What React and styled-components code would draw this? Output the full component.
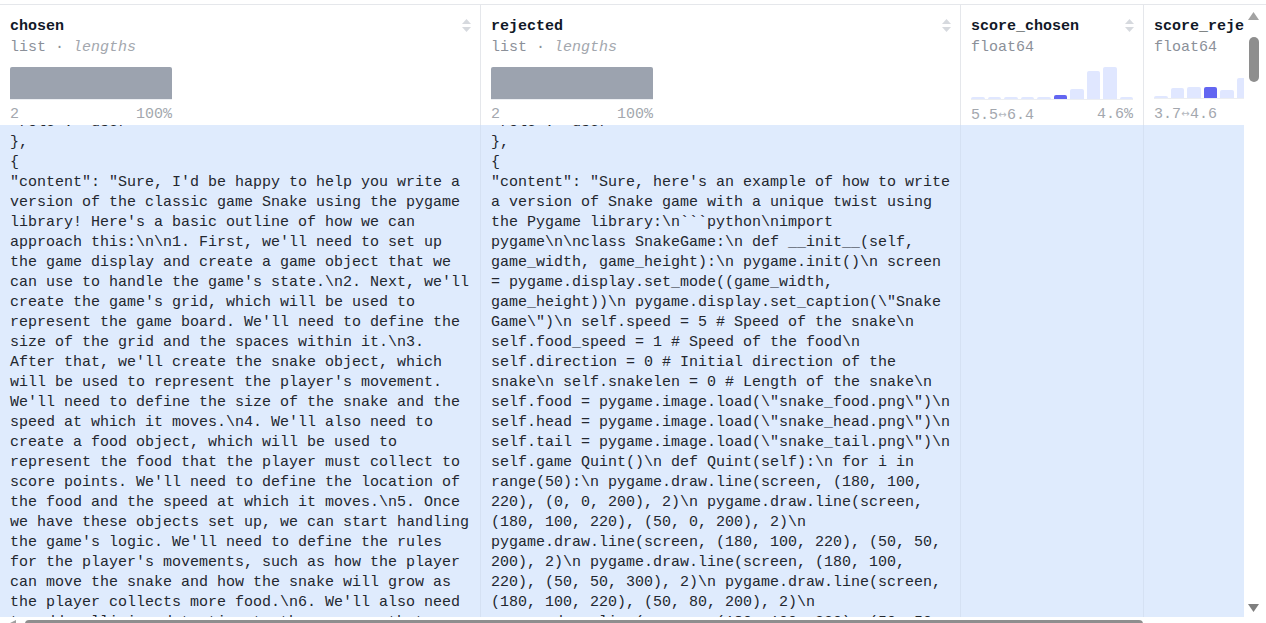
import React from 'react'
import styled, { createGlobalStyle } from 'styled-components';

const GlobalStyle = createGlobalStyle`
  html, body {
    margin: 0;
    padding: 0;
    background: #fff;
    overflow: hidden;
  }
  body {
    font-family: "Liberation Mono", "DejaVu Sans Mono", monospace;
  }
`;

const chosenLines = [
  '"role": "user"',
  '},',
  '{',
  '"content": "Sure, I\'d be happy to help you write a',
  'version of the classic game Snake using the pygame',
  'library! Here\'s a basic outline of how we can',
  'approach this:\\n\\n1. First, we\'ll need to set up',
  'the game display and create a game object that we',
  'can use to handle the game\'s state.\\n2. Next, we\'ll',
  'create the game\'s grid, which will be used to',
  'represent the game board. We\'ll need to define the',
  'size of the grid and the spaces within it.\\n3.',
  'After that, we\'ll create the snake object, which',
  'will be used to represent the player\'s movement.',
  'We\'ll need to define the size of the snake and the',
  'speed at which it moves.\\n4. We\'ll also need to',
  'create a food object, which will be used to',
  'represent the food that the player must collect to',
  'score points. We\'ll need to define the location of',
  'the food and the speed at which it moves.\\n5. Once',
  'we have these objects set up, we can start handling',
  'the game\'s logic. We\'ll need to define the rules',
  'for the player\'s movements, such as how the player',
  'can move the snake and how the snake will grow as',
  'the player collects more food.\\n6. We\'ll also need',
  'to add collision detection to the game so that',
];

const rejectedLines = [
  '"role": "user"',
  '},',
  '{',
  '"content": "Sure, here\'s an example of how to write',
  'a version of Snake game with a unique twist using',
  'the Pygame library:\\n```python\\nimport',
  'pygame\\n\\nclass SnakeGame:\\n def __init__(self,',
  'game_width, game_height):\\n pygame.init()\\n screen',
  '= pygame.display.set_mode((game_width,',
  'game_height))\\n pygame.display.set_caption(\\"Snake',
  'Game\\")\\n self.speed = 5 # Speed of the snake\\n',
  'self.food_speed = 1 # Speed of the food\\n',
  'self.direction = 0 # Initial direction of the',
  'snake\\n self.snakelen = 0 # Length of the snake\\n',
  'self.food = pygame.image.load(\\"snake_food.png\\")\\n',
  'self.head = pygame.image.load(\\"snake_head.png\\")\\n',
  'self.tail = pygame.image.load(\\"snake_tail.png\\")\\n',
  'self.game Quint()\\n def Quint(self):\\n for i in',
  'range(50):\\n pygame.draw.line(screen, (180, 100,',
  '220), (0, 0, 200), 2)\\n pygame.draw.line(screen,',
  '(180, 100, 220), (50, 0, 200), 2)\\n',
  'pygame.draw.line(screen, (180, 100, 220), (50, 50,',
  '200), 2)\\n pygame.draw.line(screen, (180, 100,',
  '220), (50, 50, 300), 2)\\n pygame.draw.line(screen,',
  '(180, 100, 220), (50, 80, 200), 2)\\n',
  'pygame.draw.line(screen, (180, 100, 220), (50, 50,',
];

const columns = [
  { name: 'chosen', width: 481, kind: 'list', lines: chosenLines },
  { name: 'rejected', width: 480, kind: 'list', lines: rejectedLines },
  {
    name: 'score_chosen', width: 183, kind: 'float', range: ['5.5', '6.4'], pct: '4.6%',
    bins: [2, 2, 2, 2, 2, 4, 10, 28, 32, 2], active: 5,
  },
  {
    name: 'score_rejected', width: 183, kind: 'float', range: ['3.7', '4.6'], pct: '',
    bins: [2, 10, 11, 11, 8, 20, 14, 6, 3, 2], active: 3,
  },
];

export default function App() {
  return (
    <Page>
      <GlobalStyle />
      <Frame>
        <Table>
          <HeaderRow>
            {columns.map(col => (
              <HeaderCell key={col.name} $w={col.width}>
                <TitleRow>
                  <Title>{col.name}</Title>
                  <SortIcon />
                </TitleRow>
                {col.kind === 'list'
                  ? <Subtitle>list · <em>lengths</em></Subtitle>
                  : <Subtitle>float64</Subtitle>}
                <Chart>
                  {col.kind === 'list'
                    ? <SolidBar />
                    : col.bins.map((h, i) => (
                      <HistBar key={i} $active={i === col.active} style={{ height: h }} />
                    ))}
                </Chart>
                <ChartLabels>
                  {col.kind === 'list'
                    ? <><span>2</span><span>100%</span></>
                    : <><span>{col.range[0]}<Arrow>↔</Arrow>{col.range[1]}</span><span>{col.pct}</span></>}
                </ChartLabels>
              </HeaderCell>
            ))}
          </HeaderRow>
          <BodyRow>
            {columns.map(col => (
              <BodyCell key={col.name} $w={col.width}>
                <CellText>
                  {(col.lines || []).map((l, i) => <Line key={i}>{l}</Line>)}
                </CellText>
              </BodyCell>
            ))}
          </BodyRow>
          <HScroll>
            <ScrollArrow $dir="left" $color="#a0a0a0" />
            <HThumb />
          </HScroll>
        </Table>
        <VScroll>
          <ScrollArrow $dir="up" $color="#a3a3a3" />
          <VThumb />
          <VSpacer />
          <ScrollArrow $dir="down" $color="#7f7f7f" />
        </VScroll>
      </Frame>
    </Page>
  );
}

function SortIcon() {
  return (
    <SortSvg viewBox="0 0 11 15" width="11" height="15">
      <path d="M5.5 1 L10 6 L1 6 Z" fill="currentColor" />
      <path d="M1 9 L10 9 L5.5 14 Z" fill="currentColor" />
    </SortSvg>
  );
}

function ScrollArrow({ $dir, $color }) {
  const paths = {
    up: 'M5.5 0 L11 8 L0 8 Z',
    down: 'M0 0 L11 0 L5.5 8 Z',
    left: 'M0 4 L8 0 L8 8 Z',
  };
  const horizontal = $dir === 'left';
  return (
    <ArrowSvg
      $dir={$dir}
      viewBox={horizontal ? '0 0 8 8' : '0 0 11 8'}
      width={horizontal ? 8 : 11}
      height="8"
    >
      <path d={paths[$dir]} fill={$color} />
    </ArrowSvg>
  );
}

const Page = styled.div`
  width: 1266px;
  height: 623px;
  padding-top: 4px;
  box-sizing: border-box;
  display: flex;
  flex-direction: column;
  overflow: hidden;
  background: #fff;
`;

const Frame = styled.div`
  flex: 1;
  min-height: 0;
  display: flex;
  border-top: 1px solid #e5e7eb;
`;

const Table = styled.div`
  width: 1244px;
  flex-shrink: 0;
  display: flex;
  flex-direction: column;
  overflow: hidden;
`;

const HeaderRow = styled.div`
  display: flex;
  height: 120px;
  flex-shrink: 0;
`;

const HeaderCell = styled.div`
  width: ${p => p.$w}px;
  flex-shrink: 0;
  box-sizing: border-box;
  border-right: 1px solid #e5e7eb;
  padding: 11px 10px 0 10px;
  display: flex;
  flex-direction: column;
`;

const TitleRow = styled.div`
  display: flex;
  align-items: center;
  justify-content: space-between;
  height: 21px;
`;

const Title = styled.span`
  font-size: 15px;
  font-weight: 700;
  color: #111827;
  line-height: 21px;
  white-space: nowrap;
`;

const SortSvg = styled.svg`
  color: #d6d9de;
  flex-shrink: 0;
  margin-right: -2px;
  margin-top: -2px;
`;

const Subtitle = styled.div`
  font-size: 15px;
  line-height: 21px;
  color: #8b9099;
  white-space: nowrap;

  em {
    font-style: italic;
    color: #a3a7ae;
  }
`;

const Chart = styled.div`
  margin-top: 9px;
  width: 162px;
  height: 32px;
  display: flex;
  align-items: flex-end;
  gap: 3px;
  border-bottom: 1px solid #eceef2;
`;

const SolidBar = styled.div`
  width: 100%;
  height: 32px;
  background: #9ca3af;
  border-radius: 2px 2px 0 0;
`;

const HistBar = styled.div`
  flex: 1;
  background: ${p => (p.$active ? '#6366f1' : '#e0e7ff')};
  border-radius: 2px 2px 0 0;
`;

const ChartLabels = styled.div`
  margin-top: 5px;
  width: 162px;
  display: flex;
  justify-content: space-between;
  font-size: 15px;
  line-height: 20px;
  color: #a3a7ae;
  white-space: nowrap;
`;

const Arrow = styled.span`
  display: inline-block;
  width: 9px;
  text-align: center;
  font-family: "DejaVu Sans", sans-serif;
  font-size: 10px;
  vertical-align: 1px;
  color: #b4b8be;
`;

const BodyRow = styled.div`
  display: flex;
  height: 492px;
  flex-shrink: 0;
  overflow: hidden;
`;

const BodyCell = styled.div`
  width: ${p => p.$w}px;
  flex-shrink: 0;
  box-sizing: border-box;
  background: #dfebfd;
  border-right: 1px solid #d5e1f3;
  padding: 0 10px;
  overflow: hidden;
`;

const CellText = styled.div`
  margin-top: -12px;
`;

const Line = styled.div`
  font-size: 15px;
  line-height: 20px;
  color: #23272f;
  white-space: pre;
`;

const HScroll = styled.div`
  height: 15px;
  flex-shrink: 0;
  display: flex;
  align-items: flex-start;
  padding-top: 3px;
  background: #fff;
`;

const HThumb = styled.div`
  margin-left: 9px;
  width: 1118px;
  height: 8px;
  border-radius: 4px;
  background: #8e8e8e;
`;

const VScroll = styled.div`
  width: 22px;
  flex-shrink: 0;
  display: flex;
  flex-direction: column;
  align-items: center;
  padding: 7px 3px 11px 0;
  box-sizing: border-box;
  background: #fff;
`;

const VThumb = styled.div`
  margin-top: 17px;
  width: 10px;
  height: 45px;
  border-radius: 5px;
  background: #8e8e8e;
`;

const VSpacer = styled.div`
  flex: 1;
`;

const ArrowSvg = styled.svg`
  flex-shrink: 0;
  margin-left: ${p => (p.$dir === 'left' ? '8px' : '0')};
`;
